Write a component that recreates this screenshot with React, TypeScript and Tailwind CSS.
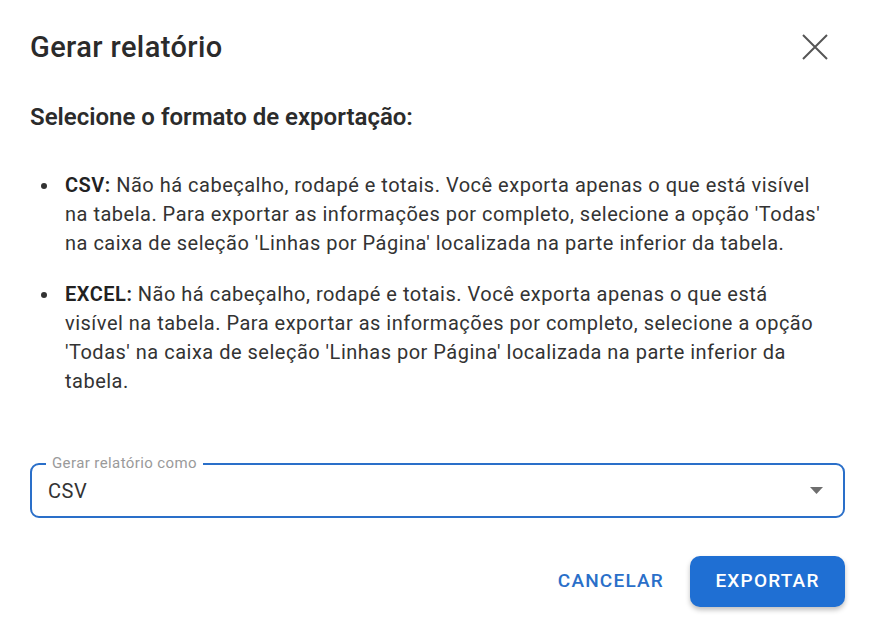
import React, { useState } from 'react';

const formats = [
  {
    key: 'CSV',
    text: "Não há cabeçalho, rodapé e totais. Você exporta apenas o que está visível na tabela. Para exportar as informações por completo, selecione a opção 'Todas' na caixa de seleção 'Linhas por Página' localizada na parte inferior da tabela.",
  },
  {
    key: 'EXCEL',
    text: "Não há cabeçalho, rodapé e totais. Você exporta apenas o que está visível na tabela. Para exportar as informações por completo, selecione a opção 'Todas' na caixa de seleção 'Linhas por Página' localizada na parte inferior da tabela.",
  },
];

export default function App() {
  const [format, setFormat] = useState('CSV');

  return (
    <div className="w-[875px] h-[630px] bg-white px-[30px] font-['Roboto',sans-serif] text-[#333]">
      {/* Header */}
      <div className="flex items-center justify-between pt-[28px]">
        <h2 className="text-[29px] leading-[38px] font-medium tracking-[0.4px] text-[#2b2b2b]">Gerar relatório</h2>
        <button className="mr-[16px] flex h-[28px] w-[28px] items-center justify-center text-[#555]">
          <svg width="26" height="26" viewBox="0 0 26 26" fill="none" stroke="currentColor" strokeWidth="2">
            <path d="M1 1 L25 25 M25 1 L1 25" />
          </svg>
        </button>
      </div>

      <p className="mt-[35px] text-[24px] leading-[32px] font-semibold text-[#2b2b2b]">
        Selecione o formato de exportação:
      </p>

      {/* Format list */}
      <ul className="mt-[38px] flex flex-col gap-[22px] pr-[17px]">
        {formats.map((f) => (
          <li key={f.key} className="flex items-start text-[20px] leading-[29px] tracking-[0.5px]">
            <span className="ml-[11px] mt-[12px] h-[6px] w-[6px] shrink-0 rounded-full bg-[#333]" />
            <span className="ml-[18px]">
              <b className="font-semibold text-[#222]">{f.key}:</b> {f.text}
            </span>
          </li>
        ))}
      </ul>

      {/* Select */}
      <div className="relative mt-[67px] h-[55px] rounded-[9px] border-2 border-[#2a6fc9]">
        <span className="absolute -top-[11px] left-[14px] bg-white px-[6px] text-[15px] leading-[18px] tracking-[0.4px] text-[#9a9a9a]">
          Gerar relatório como
        </span>
        <div className="flex h-full items-center justify-between pl-[16px] pr-[20px]">
          <span className="text-[20px] tracking-[0.5px] text-[#333]">{format}</span>
          <svg width="13" height="7" viewBox="0 0 13 7" className="text-[#6e6e6e]">
            <path d="M0 0 L13 0 L6.5 7 Z" fill="currentColor" />
          </svg>
        </div>
        <select
          value={format}
          onChange={(e) => setFormat(e.target.value)}
          className="absolute inset-0 opacity-0"
        >
          <option value="CSV">CSV</option>
          <option value="EXCEL">EXCEL</option>
        </select>
      </div>

      {/* Actions */}
      <div className="mt-[38px] flex items-center justify-end gap-[26px]">
        <button className="text-[19px] font-medium tracking-[1.2px] text-[#2a6fc9]">CANCELAR</button>
        <button className="h-[51px] w-[155px] rounded-[10px] bg-[#1f6fd3] text-[19px] font-medium tracking-[1.2px] text-white shadow-[0_3px_5px_rgba(0,0,0,0.25)]">
          EXPORTAR
        </button>
      </div>
    </div>
  );
}
